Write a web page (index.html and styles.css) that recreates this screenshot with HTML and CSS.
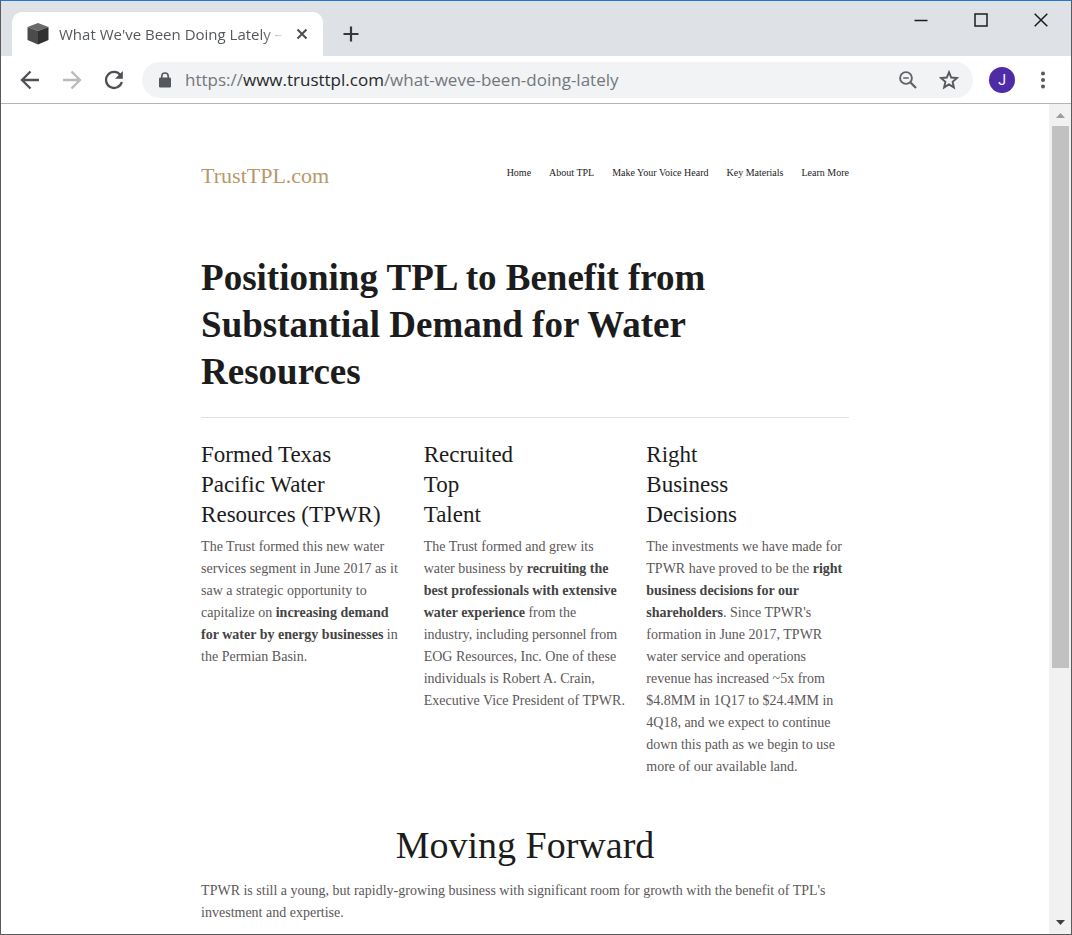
FILE: index.html
```
<!DOCTYPE html>
<html lang="en">
<head>
    <meta charset="UTF-8">
    <meta name="viewport" content="width=device-width, initial-scale=1.0">
    <title>What We've Been Doing Lately</title>
    <link rel="stylesheet" href="styles.css">
</head>
<body>
    <div class="browser">
        <div class="tab-strip">
            <div class="tab">
                <svg class="favicon" width="22" height="22" viewBox="0 0 22 22">
                    <path d="M11 0L21.500 4L11 8L.5 4z" fill="#6a6a6a"/>
                    <path d="M.5 4L11 8V21.500L.5 17z" fill="#4b4b4b"/>
                    <path d="M21.500 4L11 8V21.500L21.500 17z" fill="#303030"/>
                </svg>
                <span class="tab-title">What We've Been Doing Lately –</span>
                <button type="button" class="icon-btn tab-close" aria-label="Close tab">
                    <svg width="12" height="12" viewBox="0 0 12 12"><path d="M1.500 1.500l9 9M10.500 1.500l-9 9" stroke="#4a4d51" stroke-width="2"/></svg>
                </button>
            </div>
            <button type="button" class="icon-btn new-tab" aria-label="New tab">
                <svg width="16" height="16" viewBox="0 0 16 16"><path d="M8 .5v15M.5 8h15" stroke="#35383c" stroke-width="2.200"/></svg>
            </button>
            <div class="window-buttons">
                <button type="button" class="icon-btn" aria-label="Minimize">
                    <svg width="14" height="14" viewBox="0 0 14 14"><path d="M.5 7.500h13" stroke="#1c1c1c" stroke-width="1.500"/></svg>
                </button>
                <button type="button" class="icon-btn" aria-label="Maximize">
                    <svg width="14" height="14" viewBox="0 0 14 14"><path d="M1 1h12v12H1z" fill="none" stroke="#1c1c1c" stroke-width="1.500"/></svg>
                </button>
                <button type="button" class="icon-btn" aria-label="Close">
                    <svg width="14" height="14" viewBox="0 0 14 14"><path d="M.7.7l12.600 12.600M13.300.7L.7 13.300" stroke="#1c1c1c" stroke-width="1.500"/></svg>
                </button>
            </div>
        </div>
        <div class="toolbar">
            <button type="button" class="icon-btn" aria-label="Back">
                <svg width="20" height="20" viewBox="0 0 20 20"><path d="M19 10H2.500M10.500 1.500L2 10l8.500 8.500" fill="none" stroke="#4d5055" stroke-width="2.300"/></svg>
            </button>
            <button type="button" class="icon-btn" aria-label="Forward">
                <svg width="20" height="20" viewBox="0 0 20 20"><path d="M1 10h16.500M9.500 1.500L18 10l-8.500 8.500" fill="none" stroke="#b8babd" stroke-width="2.300"/></svg>
            </button>
            <button type="button" class="icon-btn" aria-label="Reload">
                <svg width="20" height="20" viewBox="0 0 20 20"><path d="M16.500 5.200A8 8 0 1 0 17.800 12" fill="none" stroke="#4d5055" stroke-width="2.300"/><path d="M18.800 1v7.800H11z" fill="#4d5055"/></svg>
            </button>
            <div class="address-bar">
                <svg width="12" height="16" viewBox="0 0 12 16"><path d="M2.800 6V4.200a3.200 3.200 0 0 1 6.400 0V6" fill="none" stroke="#55585c" stroke-width="1.600"/><rect y="5.500" width="12" height="10" rx="1.200" fill="#55585c"/></svg>
                <a class="url" href="#">https://<span class="host">www.trusttpl.com</span>/what-weve-been-doing-lately</a>
                <button type="button" class="icon-btn" aria-label="Zoom out">
                    <svg width="18" height="18" viewBox="0 0 18 18"><circle cx="7" cy="7" r="5.900" fill="none" stroke="#5f6368" stroke-width="1.900"/><path d="M11.500 11.500l5.500 5.500" stroke="#5f6368" stroke-width="2.300"/><path d="M4.200 7h5.600" stroke="#5f6368" stroke-width="1.500"/></svg>
                </button>
                <button type="button" class="icon-btn" aria-label="Bookmark this page">
                    <svg width="20" height="20" viewBox="0 0 20 20"><path d="M10 2.200l2.200 5.300 5.800.5-4.400 3.800 1.300 5.600-4.900-3-4.900 3 1.300-5.600L2 8l5.800-.5z" fill="none" stroke="#55595e" stroke-width="1.900"/></svg>
                </button>
            </div>
            <button type="button" class="icon-btn avatar" aria-label="Profile">J</button>
            <button type="button" class="icon-btn menu" aria-label="Menu">
                <svg width="4" height="18" viewBox="0 0 4 18"><g fill="#55585c"><circle cx="2" cy="2.500" r="2"/><circle cx="2" cy="9" r="2"/><circle cx="2" cy="15.500" r="2"/></g></svg>
            </button>
        </div>
        <div class="viewport">
            <div class="page">
                <header class="site-header">
                    <a class="logo" href="#">TrustTPL.com</a>
                    <nav class="site-nav">
                        <a href="#">Home</a>
                        <a href="#">About TPL</a>
                        <a href="#">Make Your Voice Heard</a>
                        <a href="#">Key Materials</a>
                        <a href="#">Learn More</a>
                    </nav>
                </header>
                <main>
                    <h1>Positioning TPL to Benefit from Substantial Demand for Water Resources</h1>
                    <div class="columns">
                        <section>
                            <h2>Formed Texas<br>Pacific Water<br>Resources (TPWR)</h2>
                            <p>The Trust formed this new water<br>services segment in June 2017 as it<br>saw a strategic opportunity to<br>capitalize on <strong>increasing demand<br>for water by energy businesses</strong> in<br>the Permian Basin.</p>
                        </section>
                        <section>
                            <h2>Recruited<br>Top<br>Talent</h2>
                            <p>The Trust formed and grew its<br>water business by <strong>recruiting the<br>best professionals with extensive<br>water experience</strong> from the<br>industry, including personnel from<br>EOG Resources, Inc. One of these<br>individuals is Robert A. Crain,<br>Executive Vice President of TPWR.</p>
                        </section>
                        <section>
                            <h2>Right<br>Business<br>Decisions</h2>
                            <p>The investments we have made for<br>TPWR have proved to be the <strong>right<br>business decisions for our<br>shareholders</strong>. Since TPWR's<br>formation in June 2017, TPWR<br>water service and operations<br>revenue has increased ~5x from<br>$4.8MM in 1Q17 to $24.4MM in<br>4Q18, and we expect to continue<br>down this path as we begin to use<br>more of our available land.</p>
                        </section>
                    </div>
                    <h2 class="forward">Moving Forward</h2>
                    <p>TPWR is still a young, but rapidly-growing business with significant room for growth with the benefit of TPL's<br>investment and expertise.</p>
                </main>
            </div>
            <div class="scrollbar">
                <svg width="9" height="5" viewBox="0 0 9 5"><path d="M0 5L4.500 0L9 5z" fill="#9c9c9c"/></svg>
                <div class="track"><div class="thumb"></div></div>
                <svg width="9" height="5" viewBox="0 0 9 5"><path d="M0 0h9L4.500 5z" fill="#404040"/></svg>
            </div>
        </div>
    </div>
</body>
</html>
```
FILE: styles.css
```
* {
    box-sizing: border-box;
}
body {
    margin: 0;
    font-family: "Liberation Serif", serif;
    color: #1c1c1c;
}
a {
    color: inherit;
    text-decoration: none;
}
.browser {
    display: flex;
    flex-direction: column;
    height: 100vh;
    background: #fff;
    border: 1px solid #5a5a5a;
    border-top-color: #2478cc;
    overflow: hidden;
}
.icon-btn {
    display: flex;
    align-items: center;
    justify-content: center;
    padding: 0;
    border: none;
    background: none;
    cursor: pointer;
}
.tab-strip {
    display: flex;
    align-items: flex-end;
    height: 55px;
    padding-left: 11px;
    background: #dee1e6;
    font-family: "Open Sans", sans-serif;
}
.tab {
    display: flex;
    align-items: center;
    width: 311px;
    height: 44px;
    padding: 0 15px;
    background: #fff;
    border-radius: 10px 10px 0 0;
}
.tab-title {
    flex: 1;
    margin: 0 10px;
    white-space: nowrap;
    font-size: 15px;
    color: #55585c;
    mask-image: linear-gradient(to right, #000 90%, transparent);
}
.new-tab {
    height: 44px;
    margin-left: 20px;
}
.window-buttons {
    display: flex;
    gap: 46px;
    align-self: flex-start;
    margin-left: auto;
    padding: 12px 23px 0 0;
}
.toolbar {
    display: flex;
    align-items: center;
    gap: 22px;
    height: 48px;
    padding: 0 26px 0 19px;
    border-bottom: 1px solid #b4b4b4;
    font-family: "Open Sans", sans-serif;
}
.address-bar {
    display: flex;
    flex: 1;
    align-items: center;
    gap: 22px;
    height: 36px;
    margin: 0 -6px 0 -4px;
    padding: 0 14px 0 17px;
    background: #f1f3f4;
    border-radius: 18px;
}
.url {
    flex: 1;
    margin-left: -8px;
    font-size: 17px;
    white-space: nowrap;
    color: #73777c;
}
.host {
    color: #26282b;
}
.avatar {
    width: 26px;
    height: 26px;
    border-radius: 50%;
    background: #4f2ba8;
    color: #fff;
    font-family: Roboto, sans-serif;
    font-size: 14px;
}
.menu {
    margin-left: 4px;
}
.viewport {
    display: flex;
    flex: 1;
    min-height: 0;
}
.page {
    flex: 1;
    padding: 56px 18.7% 0;
    overflow: hidden;
}
.site-header {
    display: flex;
    align-items: flex-start;
    justify-content: space-between;
}
.logo {
    font-size: 22px;
    line-height: 32px;
    color: #b8986a;
}
.site-nav {
    display: flex;
    gap: 18px;
    font-size: 10px;
    line-height: 26px;
    white-space: nowrap;
}
h1 {
    margin: 62px 0 22px;
    padding-bottom: 22px;
    border-bottom: 1px solid #e0e0e0;
    font-size: 37px;
    line-height: 47px;
}
.columns {
    display: grid;
    grid-template-columns: repeat(3, 1fr);
    gap: 20px;
    white-space: nowrap;
}
h2 {
    margin: 0 0 6px;
    font-size: 23px;
    font-weight: normal;
    line-height: 30px;
}
p {
    margin: 0;
    font-size: 14px;
    line-height: 22px;
    color: #5c5758;
}
strong {
    color: #444;
}
.forward {
    margin: 42px 0 10px;
    font-size: 38px;
    line-height: 50px;
    text-align: center;
}
.scrollbar {
    display: flex;
    flex-direction: column;
    align-items: center;
    gap: 8px;
    width: 22px;
    padding: 9px 0;
    background: #f1f1f1;
}
.track {
    flex: 1;
    width: 17px;
}
.thumb {
    height: 69%;
    background: #c1c1c1;
}
```
